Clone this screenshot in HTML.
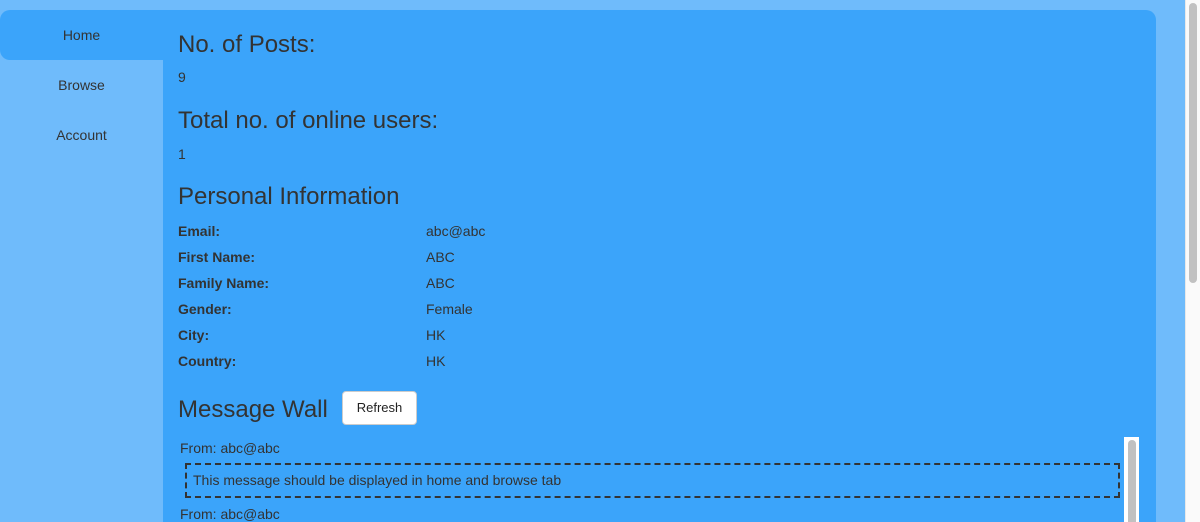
<!DOCTYPE html>
<html style="overflow:hidden;height:522px"><head><style>
body{margin:0;width:1200px;height:522px;overflow:hidden;background:#6fbbfb;font-family:"Liberation Sans",sans-serif;color:#333;position:relative}
.side{position:absolute;left:0;top:10px;width:163px;height:512px;background:#6fbbfb}
.tab{height:50px;line-height:50px;text-align:center;font-size:14px}
.tab.on{background:#3ba4fa;border-radius:10px 0 0 10px}
.main{position:absolute;left:163px;top:10px;width:993px;height:512px;background:#3ba4fa;border-radius:0 10px 0 0;overflow:hidden}
.a{position:absolute;white-space:nowrap}
h2{font-weight:normal;font-size:24px;margin:0;position:absolute;left:15px;white-space:nowrap}
.l{position:absolute;left:15px;font-weight:bold;font-size:14px}
.v{position:absolute;left:263px;font-size:14px}
.btn{position:absolute;left:179px;top:381px;width:73px;height:32px;background:#fff;border:1px solid #ccc;border-radius:4px;font-size:13px;text-align:center;line-height:32px;color:#222}
.msg{position:absolute;border:2px dashed #333;font-size:14px;line-height:31px;padding-left:6px;box-sizing:border-box;width:935px;height:35px}
</style></head><body>
<div class="side"><div class="tab on">Home</div><div class="tab">Browse</div><div class="tab">Account</div></div>
<div class="main">
<h2 style="top:21px">No. of Posts:</h2>
<div class="a" style="left:15px;top:59px;font-size:14px">9</div>
<h2 style="top:97px">Total no. of online users:</h2>
<div class="a" style="left:15px;top:136px;font-size:14px">1</div>
<h2 style="top:173px">Personal Information</h2>
<div class="l" style="top:213px">Email:</div><div class="v" style="top:213px">abc@abc</div>
<div class="l" style="top:239px">First Name:</div><div class="v" style="top:239px">ABC</div>
<div class="l" style="top:265px">Family Name:</div><div class="v" style="top:265px">ABC</div>
<div class="l" style="top:291px">Gender:</div><div class="v" style="top:291px">Female</div>
<div class="l" style="top:317px">City:</div><div class="v" style="top:317px">HK</div>
<div class="l" style="top:343px">Country:</div><div class="v" style="top:343px">HK</div>
<h2 style="top:386px">Message Wall</h2>
<div class="btn">Refresh</div>
<div class="a" style="left:17px;top:430px;font-size:14px">From: abc@abc</div>
<div class="msg" style="left:22px;top:453px">This message should be displayed in home and browse tab</div>
<div class="a" style="left:17px;top:496px;font-size:14px">From: abc@abc</div>
<div class="a" style="left:961px;top:427px;width:15px;height:85px;background:#fff;overflow:hidden"><div style="position:absolute;left:4px;top:3px;width:8px;height:90px;background:#c1c1c1;border-radius:4px"></div></div>
</div>
<div class="a" style="left:1185px;top:0;width:15px;height:522px;background:#fafafa;border-left:1px solid #e8e8e8;box-sizing:border-box"><div style="position:absolute;left:3px;top:3px;width:8px;height:280px;background:#c1c1c1;border-radius:4px"></div></div>
</body></html>
